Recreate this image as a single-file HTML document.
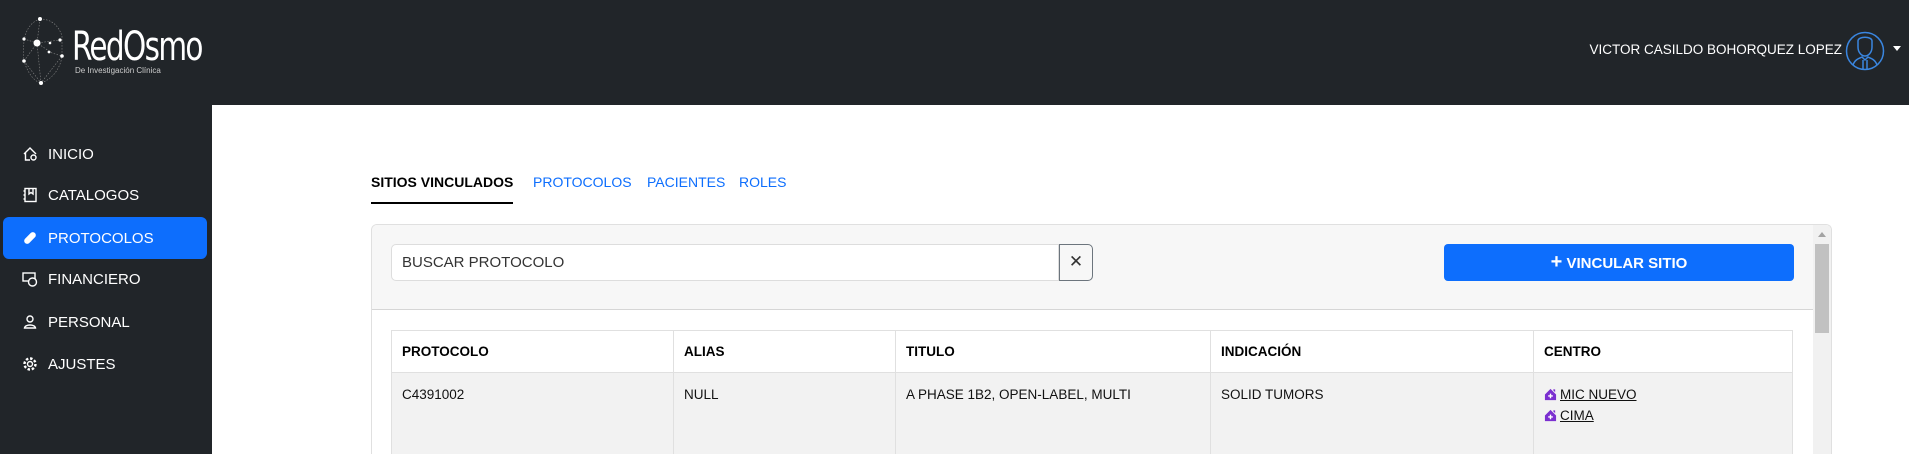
<!DOCTYPE html>
<html><head><meta charset="utf-8"><style>
*{box-sizing:border-box;margin:0;padding:0}
html,body{width:1909px;height:454px;overflow:hidden}
body{background:#fff;font-family:"Liberation Sans",sans-serif;position:relative}
.hdr{position:absolute;left:0;top:0;width:1909px;height:105px;background:#212529}
.side{position:absolute;left:0;top:105px;width:212px;height:349px;background:#212529}
.nav{position:absolute;left:3px;width:204px;height:42px;color:#fff;font-size:15px;display:flex;align-items:center;padding-left:19px;border-radius:6px}
.nav svg{width:16px;height:16px;margin-right:10px}
.nav.act{background:#0d6efd}
.tab{position:absolute;top:174px;font-size:14px;color:#0d6efd}
.card{position:absolute;left:371px;top:224px;width:1461px;height:230px;border:1px solid #e0e0e0;border-bottom:none;border-radius:6px 6px 0 0;overflow:hidden;background:#fff}
.ch{position:absolute;left:0;top:0;width:100%;height:85px;background:#f7f7f7;border-bottom:1px solid #d6d6d6}
table{position:absolute;left:19px;top:105px;border-collapse:collapse;font-size:13.5px;width:1402px;table-layout:fixed}
td,th{border:1px solid #e0e0e0;text-align:left;vertical-align:top;padding:0 10px}
th{height:42px;vertical-align:middle;font-weight:bold;color:#000;background:#fff}
td{height:100px;background:#f2f2f2;padding-top:14px;color:#111}
a{color:#111;text-decoration:underline}
.h{display:inline-block;width:13px;height:13px;vertical-align:-2px;margin-right:3px}
</style></head><body>
<div class="hdr">
 <svg style="position:absolute;left:20px;top:16px" width="46" height="70" viewBox="0 0 46 70">
  <g stroke="#888" stroke-width="0.6" fill="none" stroke-dasharray="1.5 1.5">
   <path d="M20 3 C5 8 2 25 4 45 C8 58 15 66 21 67 C30 64 40 55 42 40 L42 20 C38 8 30 3 20 3Z"/>
   <path d="M20 3 L17 27 L21 67 M4 23 L17 27 L40 24 M4 45 L17 27 L32 37 L42 40 M4 45 L21 67 L42 40"/>
  </g>
  <g fill="#fff"><circle cx="20" cy="3" r="2"/><circle cx="17" cy="27" r="3.5"/><circle cx="4" cy="23" r="1.6"/><circle cx="40" cy="24" r="1.6"/><circle cx="4" cy="45" r="1.8"/><circle cx="42" cy="40" r="1.8"/><circle cx="21" cy="67" r="2"/><circle cx="29" cy="36" r="1.4"/><circle cx="30" cy="27" r="1.3"/></g>
 </svg>
 <div style="position:absolute;left:72px;top:24px;color:#fff;font-size:40px;letter-spacing:-2px;transform:scaleX(0.82);transform-origin:left;font-family:'DejaVu Sans Condensed','Liberation Sans',sans-serif;font-weight:300">RedOsmo</div>
 <div style="position:absolute;left:75px;top:66px;color:#ccc;font-size:8px">De Investigación Clínica</div>
 <div style="position:absolute;right:67px;top:42px;color:#fff;font-size:13.5px">VICTOR CASILDO BOHORQUEZ LOPEZ</div>
 <svg style="position:absolute;left:1845px;top:31px" width="40" height="40" viewBox="0 0 40 40" fill="none" stroke="#3a86e0" stroke-width="1.5"><circle cx="20" cy="20" r="18.5"/><path d="M13 10 C13 5 27 5 27 10 L27 16 C27 22 23 25 20 25 C17 25 13 22 13 16Z M8 34 C10 28 15 27 17 26 L20 29 L23 26 C25 27 30 28 32 34 M18 29 L18 38 M22 29 L22 38"/></svg>
 <div style="position:absolute;left:1893px;top:46px;width:0;height:0;border-left:4px solid transparent;border-right:4px solid transparent;border-top:5px solid #fff"></div>
</div>
<div class="side">
 <div class="nav" style="top:28px"><svg viewBox="0 0 16 16" fill="none" stroke="#fff" stroke-width="1.4"><path d="M2 8 L8 2 L14 8 M3.5 7 V14 H8"/><circle cx="11.5" cy="11.5" r="2.5"/></svg>INICIO</div>
 <div class="nav" style="top:69px"><svg viewBox="0 0 16 16" fill="none" stroke="#fff" stroke-width="1.4"><rect x="3" y="1.5" width="11" height="13"/><path d="M7 1.5 V7 L9 5.5 L11 7 V1.5 M1.5 4h2M1.5 8h2M1.5 12h2"/></svg>CATALOGOS</div>
 <div class="nav act" style="top:112px"><svg viewBox="0 0 16 16"><g transform="rotate(-45 8 8)"><rect x="1" y="5" width="14" height="6" rx="3" fill="#fff"/></g></svg>PROTOCOLOS</div>
 <div class="nav" style="top:153px"><svg viewBox="0 0 16 16" fill="none" stroke="#fff" stroke-width="1.4"><rect x="1" y="2" width="12" height="8"/><circle cx="10.5" cy="11" r="4" fill="#212529"/></svg>FINANCIERO</div>
 <div class="nav" style="top:196px"><svg viewBox="0 0 16 16" fill="none" stroke="#fff" stroke-width="1.4"><circle cx="8" cy="5" r="3"/><path d="M2.5 14 C3 10 13 10 13.5 14Z"/></svg>PERSONAL</div>
 <div class="nav" style="top:238px"><svg viewBox="0 0 16 16" fill="none" stroke="#fff" stroke-width="1.4"><circle cx="8" cy="8" r="2.5"/><circle cx="8" cy="8" r="5.5" stroke-dasharray="2.5 1.8" stroke-width="2.4"/></svg>AJUSTES</div>
</div>
<div class="tab" style="left:371px;color:#000;font-weight:bold">SITIOS VINCULADOS</div>
<div style="position:absolute;left:371px;top:202px;width:142px;height:2px;background:#000"></div>
<div class="tab" style="left:533px">PROTOCOLOS</div>
<div class="tab" style="left:647px">PACIENTES</div>
<div class="tab" style="left:739px">ROLES</div>
<div class="card">
 <div class="ch">
  <div style="position:absolute;left:19px;top:19px;width:668px;height:37px;background:#fff;border:1px solid #ddd;border-radius:5px 0 0 5px;font-size:15px;color:#333;padding:9px 10px">BUSCAR PROTOCOLO</div>
  <div style="position:absolute;left:687px;top:19px;width:34px;height:37px;border:1px solid #6c757d;border-radius:0 5px 5px 0;font-size:17px;text-align:center;line-height:34px;color:#333">✕</div>
  <div style="position:absolute;left:1072px;top:19px;width:350px;height:37px;background:#0d6efd;border-radius:4px;color:#fff;font-weight:bold;font-size:15px;text-align:center;line-height:37px"><span style="font-size:20px">+</span> VINCULAR SITIO</div>
 </div>
 <table>
  <tr><th style="width:282px">PROTOCOLO</th><th style="width:222px">ALIAS</th><th style="width:315px">TITULO</th><th style="width:323px">INDICACIÓN</th><th>CENTRO</th></tr>
  <tr><td>C4391002</td><td>NULL</td><td>A PHASE 1B2, OPEN-LABEL, MULTI</td><td>SOLID TUMORS</td><td><div><svg class="h" viewBox="0 0 14 14"><path d="M1 7 L7 1 L13 7 V13 H1Z M10 1.5 h2 v3 l-2-2z" fill="#7b2fd0"/><path d="M7 6v5M4.5 8.5h5" stroke="#fff" stroke-width="1.5"/></svg><a>MIC NUEVO</a></div><div style="margin-top:6px"><svg class="h" viewBox="0 0 14 14"><path d="M1 7 L7 1 L13 7 V13 H1Z M10 1.5 h2 v3 l-2-2z" fill="#7b2fd0"/><path d="M7 6v5M4.5 8.5h5" stroke="#fff" stroke-width="1.5"/></svg><a>CIMA</a></div></td></tr>
 </table>
 <div style="position:absolute;left:1441px;top:0;width:18px;height:230px;background:#f1f1f1"></div>
 <div style="position:absolute;left:1443px;top:19px;width:14px;height:89px;background:#c1c1c1"></div>
 <div style="position:absolute;left:1446px;top:7px;border-left:4px solid transparent;border-right:4px solid transparent;border-bottom:5px solid #a3a3a3"></div>
</div>
</body></html>
